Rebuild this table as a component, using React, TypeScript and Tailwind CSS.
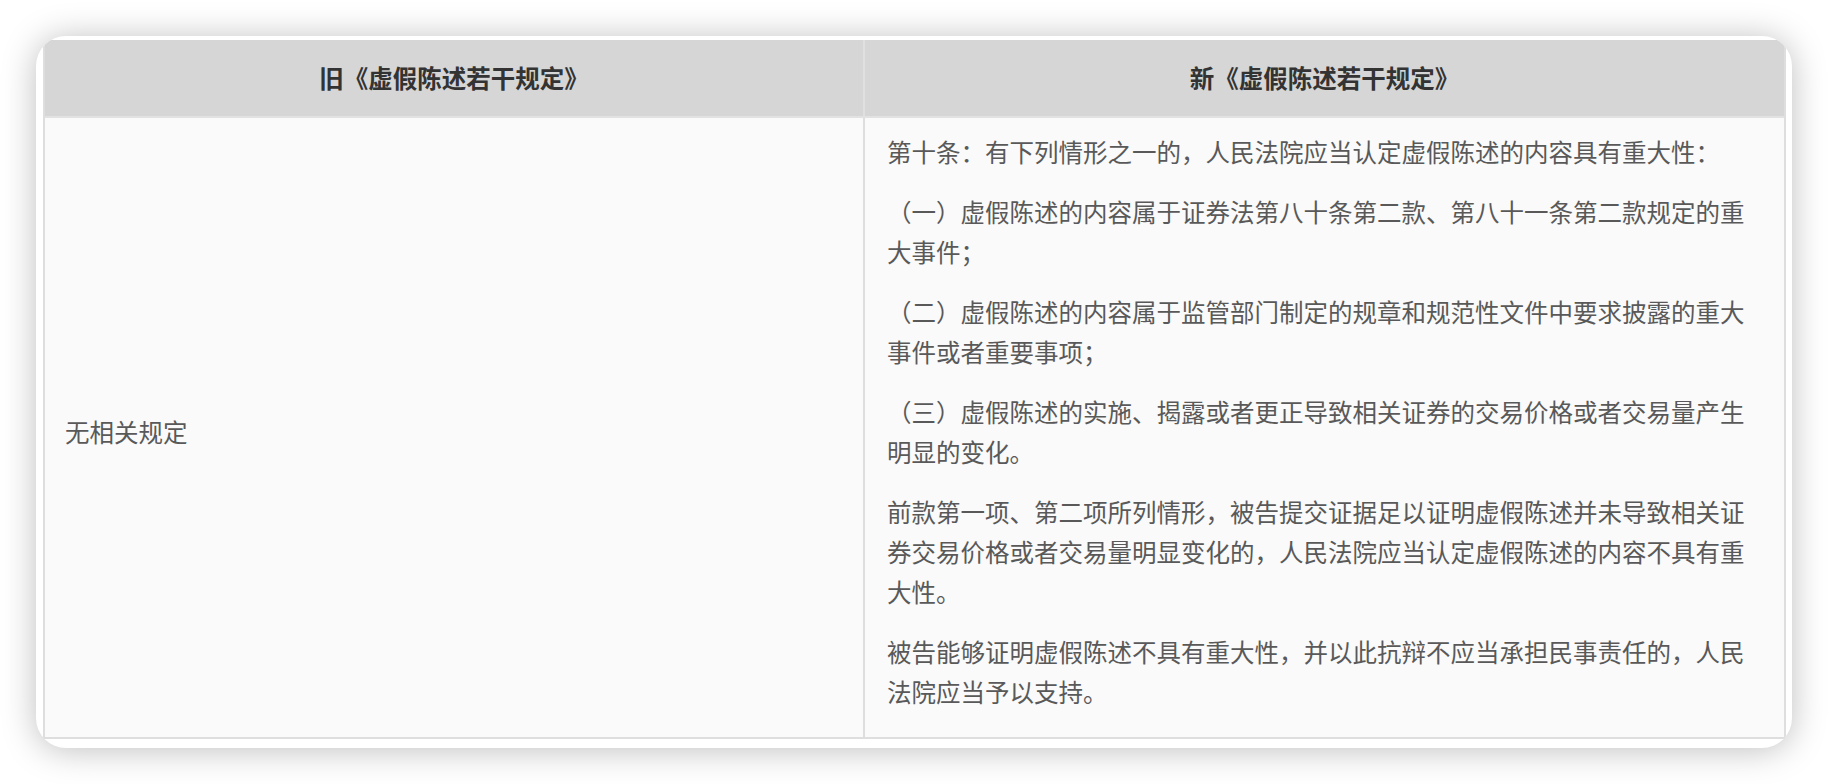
import React from "react";

const paragraphs = [
  "第十条：有下列情形之一的，人民法院应当认定虚假陈述的内容具有重大性：",
  "（一）虚假陈述的内容属于证券法第八十条第二款、第八十一条第二款规定的重大事件；",
  "（二）虚假陈述的内容属于监管部门制定的规章和规范性文件中要求披露的重大事件或者重要事项；",
  "（三）虚假陈述的实施、揭露或者更正导致相关证券的交易价格或者交易量产生明显的变化。",
  "前款第一项、第二项所列情形，被告提交证据足以证明虚假陈述并未导致相关证券交易价格或者交易量明显变化的，人民法院应当认定虚假陈述的内容不具有重大性。",
  "被告能够证明虚假陈述不具有重大性，并以此抗辩不应当承担民事责任的，人民法院应当予以支持。",
];

const font = {
  fontFamily: '"Noto Sans CJK SC", "Noto Sans", sans-serif',
};

export default function App() {
  return (
    <div className="min-h-screen w-full bg-white pt-[36px]" style={font}>
      <div className="ml-[36px] w-[1756px] overflow-hidden rounded-[30px] bg-white pt-[4px] pl-[7px] pr-[6px] pb-[9px] shadow-[0_2px_34px_rgba(0,0,0,0.26)]">
        <div className="border-x-2 border-b-2 border-[#dedede] [text-spacing-trim:space-all]">
          {/* header */}
          <div className="flex h-[78px] border-b-2 border-[#e2e2e2] bg-[#d6d6d6] text-[24.5px] font-bold text-[#333]">
            <div className="flex w-[820px] items-center justify-center border-r-2 border-[#e0e0e0]">
              旧《虚假陈述若干规定》
            </div>
            <div className="flex flex-1 items-center justify-center">
              新《虚假陈述若干规定》
            </div>
          </div>

          {/* body */}
          <div className="flex bg-[#fafafa] text-[24.5px] leading-[40px] text-[#595959]">
            <div className="flex w-[820px] items-center border-r-2 border-[#dedede] pl-[20px] pt-[8px]">
              无相关规定
            </div>
            <div className="flex flex-1 flex-col gap-[20px] pl-[22px] pr-[22px] pt-[14px] pb-[25px]">
              {paragraphs.map((p) => (
                <p key={p}>{p}</p>
              ))}
            </div>
          </div>
        </div>
      </div>
    </div>
  );
}
